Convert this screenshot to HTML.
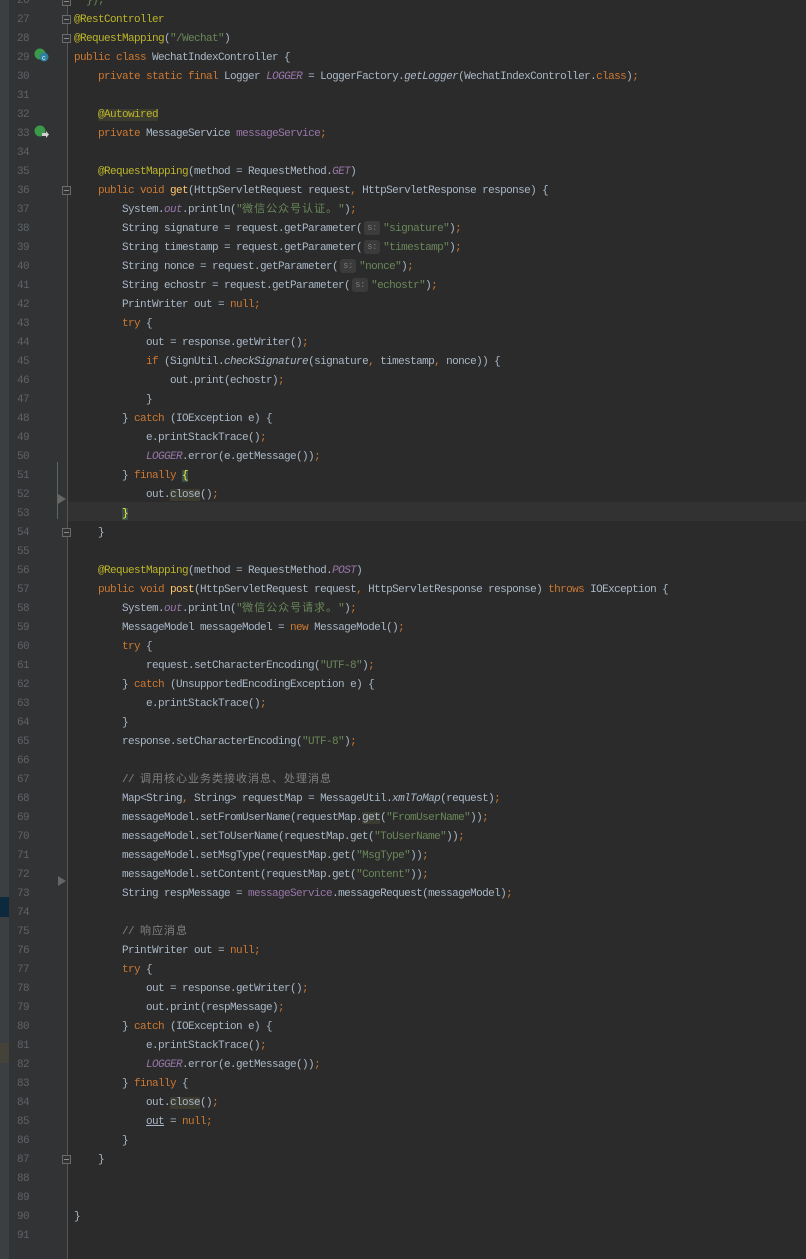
<!DOCTYPE html>
<html><head><meta charset="utf-8"><style>
body{margin:0;width:806px;height:1259px;background:#2b2b2b;overflow:hidden;position:relative;font-family:"Liberation Mono","Noto Sans CJK SC",monospace;}
#strip{position:absolute;left:0;top:0;width:9px;height:1259px;background:#3c3f41;}
#gut{position:absolute;left:9px;top:0;width:58px;height:1259px;background:#313335;}
#bord{position:absolute;left:67px;top:0;width:1px;height:1259px;background:#555555;}
.ln{position:absolute;left:9px;width:20px;text-align:right;color:#606366;font-size:11px;letter-spacing:-0.6px;height:19px;line-height:19px;}
.l{position:absolute;left:74px;height:19px;line-height:19px;font-size:11px;letter-spacing:-0.6px;color:#a9b7c6;white-space:pre;}
.k{color:#cc7832}.a{color:#bbb529}.s{color:#6a8759}.f{color:#9876aa}.i{font-style:italic}.c{color:#808080}.m{color:#ffc66d}
.z{letter-spacing:1px;font-size:11px}
.h{display:inline-block;width:16px;height:14px;line-height:14px;background:#3b3b3b;color:#787878;font-size:9px;letter-spacing:-0.5px;text-align:center;border-radius:3px;margin:0 3px 0 2px;vertical-align:middle}
.hl{background:#3b3b30}.hb{background:#3b514d;color:#ffef28}
.fold{position:absolute;left:62px;width:9px;height:9px;border:1px solid #6a6a6a;box-sizing:border-box;background:#313335}
.fold:after{content:"";position:absolute;left:1px;top:3px;width:5px;height:1px;background:#8a8a8a}
</style></head><body>
<div id="strip"></div>
<div style="position:absolute;left:0;top:897px;width:9px;height:20px;background:#0d293e"></div>
<div style="position:absolute;left:0;top:1043px;width:9px;height:20px;background:#45423a"></div>
<div id="gut"></div>
<div style="position:absolute;left:68px;top:502px;width:738px;height:19px;background:#323232"></div>
<div style="position:absolute;left:57px;top:462px;width:1px;height:57px;background:#5a6a5a"></div>
<div id="bord"></div>
<div style="position:absolute;left:58px;top:494px;width:0;height:0;border-top:5px solid transparent;border-bottom:5px solid transparent;border-left:8px solid #666"></div>
<div style="position:absolute;left:58px;top:876px;width:0;height:0;border-top:5px solid transparent;border-bottom:5px solid transparent;border-left:8px solid #666"></div>
<svg style="position:absolute;left:34px;top:47px" width="16" height="16"><circle cx="6" cy="7" r="5.5" fill="#3a9a4a"/><circle cx="10" cy="10" r="4.5" fill="#2f7fa0"/><text x="8" y="13" font-size="7" fill="#cfe" font-family="Liberation Sans">c</text></svg>
<svg style="position:absolute;left:34px;top:124px" width="16" height="16"><circle cx="6" cy="7" r="5.5" fill="#3a9a4a"/><path d="M8 9h4v-2l3 3.5-3 3.5v-2h-4z" fill="#d0d0d0"/></svg>
<div class="fold" style="top:-3px"></div>
<div class="fold" style="top:15px"></div>
<div class="fold" style="top:34px"></div>
<div class="fold" style="top:186px"></div>
<div class="fold" style="top:528px"></div>
<div class="fold" style="top:1155px"></div>
<div id="code"></div>
<script>
var L={
26:'<span class="s">  });</span>',
27:'<span class="a">@RestController</span>',
28:'<span class="a">@RequestMapping</span>(<span class="s">"/Wechat"</span>)',
29:'<span class="k">public class </span>WechatIndexController {',
30:'    <span class="k">private static final </span>Logger <span class="f i">LOGGER </span>= LoggerFactory.<span class="i">getLogger</span>(WechatIndexController.<span class="k">class</span>)<span class="k">;</span>',
32:'    <span class="a hl">@Autowired</span>',
33:'    <span class="k">private </span>MessageService <span class="f">messageService</span><span class="k">;</span>',
35:'    <span class="a">@RequestMapping</span>(method = RequestMethod.<span class="f i">GET</span>)',
36:'    <span class="k">public void </span><span class="m">get</span>(HttpServletRequest request<span class="k">, </span>HttpServletResponse response) {',
37:'        System.<span class="f i">out</span>.println(<span class="s">"<span class="z">微信公众号认证。</span>"</span>)<span class="k">;</span>',
38:'        String signature = request.getParameter(<span class="h">s:</span><span class="s">"signature"</span>)<span class="k">;</span>',
39:'        String timestamp = request.getParameter(<span class="h">s:</span><span class="s">"timestamp"</span>)<span class="k">;</span>',
40:'        String nonce = request.getParameter(<span class="h">s:</span><span class="s">"nonce"</span>)<span class="k">;</span>',
41:'        String echostr = request.getParameter(<span class="h">s:</span><span class="s">"echostr"</span>)<span class="k">;</span>',
42:'        PrintWriter out = <span class="k">null;</span>',
43:'        <span class="k">try </span>{',
44:'            out = response.getWriter()<span class="k">;</span>',
45:'            <span class="k">if </span>(SignUtil.<span class="i">checkSignature</span>(signature<span class="k">, </span>timestamp<span class="k">, </span>nonce)) {',
46:'                out.print(echostr)<span class="k">;</span>',
47:'            }',
48:'        } <span class="k">catch </span>(IOException e) {',
49:'            e.printStackTrace()<span class="k">;</span>',
50:'            <span class="f i">LOGGER</span>.error(e.getMessage())<span class="k">;</span>',
51:'        } <span class="k">finally </span><span class="hb">{</span>',
52:'            out.<span class="hl">close</span>()<span class="k">;</span>',
53:'        <span class="hb">}</span>',
54:'    }',
56:'    <span class="a">@RequestMapping</span>(method = RequestMethod.<span class="f i">POST</span>)',
57:'    <span class="k">public void </span><span class="m">post</span>(HttpServletRequest request<span class="k">, </span>HttpServletResponse response) <span class="k">throws </span>IOException {',
58:'        System.<span class="f i">out</span>.println(<span class="s">"<span class="z">微信公众号请求。</span>"</span>)<span class="k">;</span>',
59:'        MessageModel messageModel = <span class="k">new </span>MessageModel()<span class="k">;</span>',
60:'        <span class="k">try </span>{',
61:'            request.setCharacterEncoding(<span class="s">"UTF-8"</span>)<span class="k">;</span>',
62:'        } <span class="k">catch </span>(UnsupportedEncodingException e) {',
63:'            e.printStackTrace()<span class="k">;</span>',
64:'        }',
65:'        response.setCharacterEncoding(<span class="s">"UTF-8"</span>)<span class="k">;</span>',
67:'        <span class="c">// <span class="z">调用核心业务类接收消息、处理消息</span></span>',
68:'        Map&lt;String<span class="k">, </span>String&gt; requestMap = MessageUtil.<span class="i">xmlToMap</span>(request)<span class="k">;</span>',
69:'        messageModel.setFromUserName(requestMap.<span class="hl">get</span>(<span class="s">"FromUserName"</span>))<span class="k">;</span>',
70:'        messageModel.setToUserName(requestMap.get(<span class="s">"ToUserName"</span>))<span class="k">;</span>',
71:'        messageModel.setMsgType(requestMap.get(<span class="s">"MsgType"</span>))<span class="k">;</span>',
72:'        messageModel.setContent(requestMap.get(<span class="s">"Content"</span>))<span class="k">;</span>',
73:'        String respMessage = <span class="f">messageService</span>.messageRequest(messageModel)<span class="k">;</span>',
75:'        <span class="c">// <span class="z">响应消息</span></span>',
76:'        PrintWriter out = <span class="k">null;</span>',
77:'        <span class="k">try </span>{',
78:'            out = response.getWriter()<span class="k">;</span>',
79:'            out.print(respMessage)<span class="k">;</span>',
80:'        } <span class="k">catch </span>(IOException e) {',
81:'            e.printStackTrace()<span class="k">;</span>',
82:'            <span class="f i">LOGGER</span>.error(e.getMessage())<span class="k">;</span>',
83:'        } <span class="k">finally </span>{',
84:'            out.<span class="hl">close</span>()<span class="k">;</span>',
85:'            <span style="text-decoration:underline">out</span> = <span class="k">null;</span>',
86:'        }',
87:'    }',
90:'}'
};
var h='';
for(var n=26;n<=91;n++){var t=(n-27)*19+11;
h+='<div class="ln" style="top:'+t+'px">'+n+'</div>';
if(L[n])h+='<div class="l" style="top:'+t+'px">'+L[n]+'</div>';}
document.getElementById('code').innerHTML=h;
</script>
</body></html>
